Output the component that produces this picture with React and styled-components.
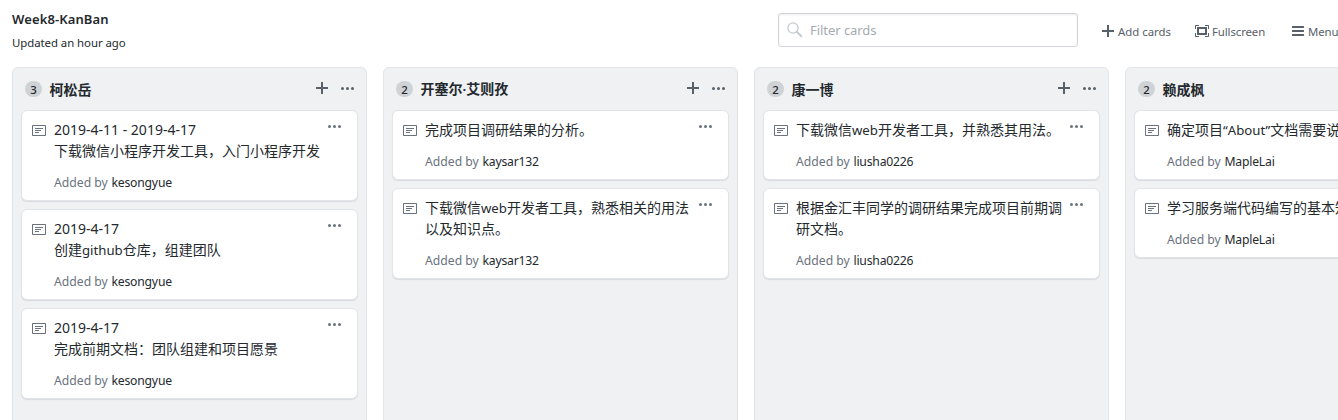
import React from "react";
import styled, { createGlobalStyle } from "styled-components";

const GlobalStyle = createGlobalStyle`
  * { box-sizing: border-box; }
  html, body { margin: 0; height: 100%; overflow: hidden; background: #fff; }
  body {
    font-family: "Noto Sans", "Noto Sans CJK SC", sans-serif;
    font-size: 14px;
    line-height: 21px;
    color: #24292e;
  }
  button { font: inherit; border: 0; padding: 0; background: none; }
`;

const Page = styled.div`
  display: flex;
  flex-direction: column;
  height: 420px;
  width: 1338px;
  overflow: hidden;
`;

const Header = styled.header`
  display: flex;
  flex: none;
  height: 67px;
  padding-left: 12px;
  white-space: nowrap;
`;

const Heading = styled.div`
  flex: none;
  width: 766px;
  padding-top: 9px;
`;

const ProjectName = styled.h1`
  margin: 0;
  font-size: 13px;
  font-weight: 600;
  line-height: 21px;
  letter-spacing: 0.1px;
`;

const Updated = styled.div`
  margin-top: 3px;
  font-size: 11.4px;
  line-height: 20px;
  letter-spacing: -0.05px;
`;

const Filter = styled.label`
  display: flex;
  flex: none;
  align-items: center;
  width: 300px;
  height: 34px;
  margin-top: 13px;
  padding-left: 8px;
  gap: 7px;
  border: 1px solid #d1d5da;
  border-radius: 3px;
  box-shadow: inset 0 1px 2px rgba(27, 31, 35, 0.075);
  color: #a6abb1;
`;

const FilterText = styled.span`
  font-size: 13px;
  letter-spacing: -0.05px;
`;

const Actions = styled.nav`
  display: flex;
  flex: none;
  padding: 21px 0 0 24px;
`;

const Action = styled.button`
  display: flex;
  flex: none;
  align-items: center;
  gap: ${(p) => p.$gap || 4}px;
  width: ${(p) => p.$width}px;
  height: 20px;
  font-size: 11.4px;
  letter-spacing: ${(p) => p.$track || 0}px;
  color: #586069;
  white-space: nowrap;
`;

const Board = styled.main`
  display: flex;
  flex: 1;
  gap: 16px;
  padding-left: 12px;
  min-height: 0;
`;

const Column = styled.section`
  flex: none;
  width: 355px;
  height: 380px;
  padding: 0 8px;
  background: #eff1f3;
  border: 1px solid #e1e4e8;
  border-radius: 6px;
`;

const ColumnHeader = styled.div`
  display: flex;
  align-items: center;
  height: 42px;
  padding: 0 4px;
`;

const Counter = styled.span`
  width: 17px;
  height: 16px;
  border-radius: 8px;
  background: #cfd3d6;
  font-size: 11.4px;
  font-weight: 500;
  line-height: 17px;
  text-align: center;
`;

const ColumnName = styled.h2`
  flex: 1;
  margin: 0 0 0 7.5px;
  font-size: 14px;
  font-weight: 700;
  line-height: 21px;
`;

const IconButton = styled.button`
  display: flex;
  color: #586069;
`;

const AddButton = styled(IconButton)`
  margin: 0 13px 2px 0;
`;

const Cards = styled.div`
  display: flex;
  flex-direction: column;
  gap: 8px;
`;

const CardBox = styled.article`
  display: flex;
  align-items: flex-start;
  padding: 8px 16px 7px 10px;
  background: #fff;
  border: 1px solid #e1e4e8;
  border-radius: 6px;
  box-shadow: 0 1px 1px rgba(27, 31, 35, 0.1);
  color: #6a737d;
`;

const NoteSlot = styled.span`
  display: flex;
  padding-top: 4px;
  width: 22px;
`;

const CardBody = styled.div`
  flex: 1;
  min-width: 0;
  white-space: nowrap;
`;

const CardLine = styled.div`
  height: 21px;
  color: #24292e;
`;

const Latin = styled.span`
  font-size: ${(p) => (p.$digits ? "1em" : "0.943em")};
`;

const Byline = styled.div`
  height: 21px;
  margin-top: 11px;
  font-size: 12.2px;
  color: #6a737d;
`;

const Author = styled.span`
  margin-left: 0.5px;
  letter-spacing: -0.2px;
  color: #24292e;
`;

const icons = {
  plus: [12, "M12 9H7v5H5V9H0V7h5V2h2v5h5v2z"],
  kebab: [13, "M1.5 9a1.5 1.5 0 1 0 0-3 1.5 1.5 0 0 0 0 3zm5 0a1.5 1.5 0 1 0 0-3 1.5 1.5 0 0 0 0 3zM13 7.5a1.5 1.5 0 1 1-3 0 1.5 1.5 0 0 1 3 0z"],
  note: [14, "M3 10h4V9H3v1zm0-2h6V7H3v1zm0-2h8V5H3v1zm10 6H1V3h12v9zM1 2c-.55 0-1 .45-1 1v9c0 .55.45 1 1 1h12c.55 0 1-.45 1-1V3c0-.55-.45-1-1-1H1z"],
  full: [14, "M13 10h1v3c0 .547-.453 1-1 1h-3v-1h3v-3zM1 10H0v3c0 .547.453 1 1 1h3v-1H1v-3zm0-7h3V2H1c-.547 0-1 .453-1 1v3h1V3zm1 1h10v8H2V4zm2 6h6V6H4v4zm6-8v1h3v3h1V3c0-.547-.453-1-1-1h-3z"],
  bars: [12, "M11.41 9H.59C0 9 0 8.59 0 8c0-.59 0-1 .59-1H11.4c.59 0 .59.41.59 1 0 .59 0 1-.59 1h.01zm0-4H.59C0 5 0 4.59 0 4c0-.59 0-1 .59-1H11.4c.59 0 .59.41.59 1 0 .59 0 1-.59 1h.01zM.59 11H11.4c.59 0 .59.41.59 1 0 .59 0 1-.59 1H.59C0 13 0 12.59 0 12c0-.59 0-1 .59-1z"],
};

function Icon({ name }) {
  const [width, d] = icons[name];
  return (
    <svg width={width} height="16" viewBox={`0 0 ${width} 16`} fill="currentColor" fillRule="evenodd">
      <path d={d} />
    </svg>
  );
}

function SearchIcon() {
  return (
    <svg width="16" height="16" viewBox="0 0 16 16" fill="none" stroke="#c6cbd1">
      <circle cx="6" cy="6" r="5.1" strokeWidth="1.3" />
      <path d="M9.9 9.9l4.4 4.4" strokeWidth="2" strokeLinecap="round" />
    </svg>
  );
}

const KebabSlot = styled(IconButton)`
  color: #6a737d;
`;

// Latin runs are set slightly smaller than the Chinese text around them; dates keep the full size.
function Mixed({ text }) {
  return text
    .split(/([\x20-\x7e“”·]+)/)
    .filter(Boolean)
    .map((part, i) =>
      /^[\x20-\x7e“”·]/.test(part) ? (
        <Latin key={i} $digits={/^\d/.test(part)}>
          {part}
        </Latin>
      ) : (
        part
      )
    );
}

const columns = [
  {
    name: "柯松岳",
    author: "kesongyue",
    cards: [
      ["2019-4-11 - 2019-4-17", "下载微信小程序开发工具，入门小程序开发"],
      ["2019-4-17", "创建github仓库，组建团队"],
      ["2019-4-17", "完成前期文档：团队组建和项目愿景"],
    ],
  },
  {
    name: "开塞尔·艾则孜",
    author: "kaysar132",
    cards: [["完成项目调研结果的分析。"], ["下载微信web开发者工具，熟悉相关的用法", "以及知识点。"]],
  },
  {
    name: "康一博",
    author: "liusha0226",
    cards: [["下载微信web开发者工具，并熟悉其用法。"], ["根据金汇丰同学的调研结果完成项目前期调", "研文档。"]],
  },
  {
    name: "赖成枫",
    author: "MapleLai",
    cards: [["确定项目“About”文档需要说明"], ["学习服务端代码编写的基本知识"]],
  },
];

function Card({ lines, author }) {
  return (
    <CardBox>
      <NoteSlot>
        <Icon name="note" />
      </NoteSlot>
      <CardBody>
        {lines.map((line) => (
          <CardLine key={line}>
            <Mixed text={line} />
          </CardLine>
        ))}
        <Byline>
          Added by <Author>{author}</Author>
        </Byline>
      </CardBody>
      <KebabSlot aria-label="Card menu">
        <Icon name="kebab" />
      </KebabSlot>
    </CardBox>
  );
}

export default function App() {
  return (
    <Page>
      <GlobalStyle />
      <Header>
        <Heading>
          <ProjectName>Week8-KanBan</ProjectName>
          <Updated>Updated an hour ago</Updated>
        </Heading>
        <Filter>
          <SearchIcon />
          <FilterText>Filter cards</FilterText>
        </Filter>
        <Actions>
          <Action $width={93}>
            <Icon name="plus" />
            Add cards
          </Action>
          <Action $width={97} $gap={3} $track={-0.1}>
            <Icon name="full" />
            Fullscreen
          </Action>
          <Action $width={50} $track={-0.1}>
            <Icon name="bars" />
            Menu
          </Action>
        </Actions>
      </Header>
      <Board>
        {columns.map(({ name, author, cards }) => (
          <Column key={name}>
            <ColumnHeader>
              <Counter>{cards.length}</Counter>
              <ColumnName>
                <Mixed text={name} />
              </ColumnName>
              <AddButton aria-label="Add card">
                <Icon name="plus" />
              </AddButton>
              <IconButton aria-label="Column menu">
                <Icon name="kebab" />
              </IconButton>
            </ColumnHeader>
            <Cards>
              {cards.map((lines) => (
                <Card key={lines.join()} lines={lines} author={author} />
              ))}
            </Cards>
          </Column>
        ))}
      </Board>
    </Page>
  );
}
